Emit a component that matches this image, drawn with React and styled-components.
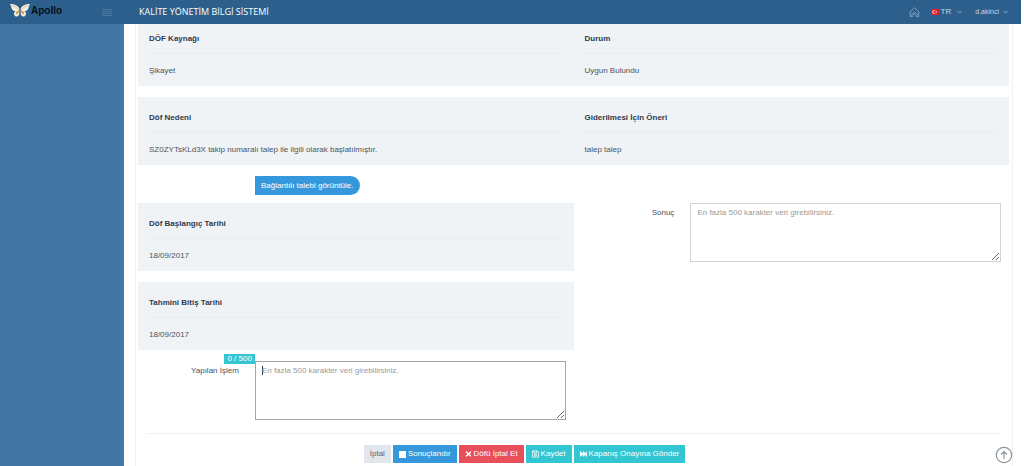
import React from 'react'
import styled, { createGlobalStyle } from 'styled-components';
import { FaTimes, FaRegSave, FaFastForward } from 'react-icons/fa';

const limitText = 'En fazla 500 karakter veri girebilirsiniz.';

function Butterfly() {
  return (
    <svg width='20' height='15' viewBox='0 0 40 30' aria-hidden='true'>
      <path d='M19 11C15 4 7 1 0 2c1 3 3 5 3 8 1 4 4 6 8 7-4 2-4 6-1 9 4 3 9 0 9-7z' fill='#f6f0e4' />
      <path d='M21 11C25 4 33 1 40 2c-1 3-3 5-3 8-1 4-4 6-8 7 4 2 4 6 1 9-4 3-9 0-9-7z' fill='#f6f0e4' />
      <path d='M4 5c6 2 10 4 14 9M12 24c1-4 3-6 6-8M36 5c-6 2-10 4-14 9M28 24c-1-4-3-6-6-8' fill='none' stroke='#b9a27c' strokeWidth='1.2' />
      <path d='M12 18l5-3 1 3-4 5zM28 18l-5-3-1 3 4 5z' fill='#cf9440' />
      <path d='M20 10v11M20 10l-3-5M20 10l3-5' fill='none' stroke='#4a443c' strokeWidth='1.4' />
    </svg>
  )
}

function HomeIcon() {
  return (
    <svg width='11' height='10' viewBox='0 0 22 20' fill='none' stroke='currentColor' strokeWidth='1.5' aria-hidden='true'>
      <path d='M1 11L11 1.500 21 11M2.500 10v9h5c0-3 1-5 3.500-5s3.500 2 3.500 5h5v-9M3 18l5-6 3-2 3 2 5 6' />
    </svg>
  )
}

function Chevron() {
  return (
    <svg className='chevron' width='5' height='4' viewBox='0 0 10 8' fill='none' stroke='currentColor' strokeWidth='2' aria-hidden='true'>
      <path d='M1 2l4 4 4-4' />
    </svg>
  )
}

function Flag() {
  return (
    <svg width='8' height='6' viewBox='0 0 16 12' aria-hidden='true'>
      <rect width='16' height='12' rx='1' fill='#e0202e' />
      <circle cx='6' cy='6' r='3.300' fill='#fff' />
      <circle cx='7' cy='6' r='2.500' fill='#e0202e' />
      <path d='M9 6l3-1.500v3z' fill='#fff' />
    </svg>
  )
}

function StopIcon() {
  return (
    <svg width='7' height='7' viewBox='0 0 7 7' fill='currentColor' aria-hidden='true'>
      <rect width='7' height='7' />
    </svg>
  )
}

function Info({ title, value }) {
  return (
    <InfoBlock>
      <h2>{title}</h2>
      <p>{value}</p>
    </InfoBlock>
  )
}

function App() {
  return (
    <>
      <GlobalStyle />
      <Header>
        <Brand>
          <Logo href='#'><Butterfly />Apollo</Logo>
          <MenuButton type='button' aria-label='Menu'><span /><span /><span /><span /></MenuButton>
        </Brand>
        <h1>KALİTE YÖNETİM BİLGİ SİSTEMİ</h1>
        <TopNav>
          <a href='#' aria-label='Home' className='home'><HomeIcon /></a>
          <a href='#' className='lang'><Flag />TR<Chevron /></a>
          <a href='#' className='user'>d.akinci<Chevron /></a>
        </TopNav>
      </Header>
      <Page>
        <Sidebar />
        <Content>
          <Portlet>
            <Panel>
              <Info title='DÖF Kaynağı' value='Şikayet' />
              <Info title='Durum' value='Uygun Bulundu' />
            </Panel>
            <Panel>
              <Info title='Döf Nedeni' value='SZ0ZYTsKLd3X takip numaralı talep ile ilgili olarak başlatılmıştır.' />
              <Info title='Giderilmesi İçin Öneri' value='talep talep' />
            </Panel>
            <LinkRow>
              <PillButton type='button'>Bağlantılı talebi görüntüle.</PillButton>
            </LinkRow>
            <Columns>
              <Column>
                <Panel><Info title='Döf Başlangıç Tarihi' value='18/09/2017' /></Panel>
                <Panel><Info title='Tahmini Bitiş Tarihi' value='18/09/2017' /></Panel>
                <Field>
                  <label htmlFor='islem'>Yapılan İşlem</label>
                  <div className='control'>
                    <Counter>0 / 500</Counter>
                    <TextArea id='islem' placeholder={limitText} $active />
                  </div>
                </Field>
              </Column>
              <Column>
                <Field>
                  <label htmlFor='sonuc'>Sonuç</label>
                  <div className='control'>
                    <TextArea id='sonuc' placeholder={limitText} />
                  </div>
                </Field>
              </Column>
            </Columns>
            <Actions>
              <Button type='button' $bg='#e1e5ec' $color='#666'>İptal</Button>
              <Button type='button' $bg='#3598dc'><StopIcon />Sonuçlandır</Button>
              <Button type='button' $bg='#e7505a'><FaTimes />Döfü İptal Et</Button>
              <Button type='button' $bg='#32c5d2'><FaRegSave />Kaydet</Button>
              <Button type='button' $bg='#32c5d2'><FaFastForward />Kapanış Onayına Gönder</Button>
            </Actions>
          </Portlet>
        </Content>
      </Page>
      <ToTop href='#' aria-label='Top'>
        <svg width='18' height='18' viewBox='0 0 18 18' fill='none' stroke='currentColor' aria-hidden='true'>
          <circle cx='9' cy='9' r='7.700' strokeWidth='1.200' />
          <path d='M9 13V5.500M6 8.500l3-3 3 3' strokeWidth='1.200' />
        </svg>
      </ToTop>
    </>
  )
}

export default App;

const GlobalStyle = createGlobalStyle`
*{
  box-sizing:border-box;
}
body{
  margin:0;
  background:#fff;
  color:#4a5362;
  font-family:"Liberation Sans", Arial, sans-serif;
  font-size:8px;
  line-height:10px;
}
h1, h2, p{
  margin:0;
}
a{
  color:inherit;
  text-decoration:none;
}
button, textarea{
  font:inherit;
}
`;

const Header = styled.header`
position:fixed;
top:0;
left:0;
right:3px;
z-index:2;
height:24px;
display:flex;
align-items:center;
background:#2c5f8c;
color:#fff;
h1{
  flex:1;
  font-family:"Open Sans", sans-serif;
  font-size:9px;
  line-height:24px;
  font-weight:400;
}
`;

const Brand = styled.div`
width:139px;
height:24px;
display:flex;
justify-content:space-between;
padding:3px 27px 0 10px;
`;

const Logo = styled.a`
height:15px;
display:flex;
align-items:center;
gap:1px;
color:#080d14;
font-size:10px;
font-weight:700;
`;

const MenuButton = styled.button`
width:10px;
height:18px;
display:flex;
flex-direction:column;
justify-content:center;
gap:1px;
padding:0;
border:none;
background:none;
cursor:pointer;
span{
  height:1px;
  background:#4a79a3;
}
`;

const TopNav = styled.nav`
display:flex;
align-items:center;
color:#c6d8ea;
padding-right:13px;
a{
  display:flex;
  align-items:center;
}
.home{
  color:#8fb0cf;
  margin-right:11px;
}
.lang{
  gap:2px;
  margin-right:13px;
}
.user{
  font-size:7px;
}
.chevron{
  color:#8fb0cf;
  margin-left:4px;
}
`;

const Page = styled.div`
display:flex;
min-height:100vh;
`;

const Sidebar = styled.aside`
width:124px;
flex-shrink:0;
background:#4276a5;
`;

const Content = styled.main`
flex:1;
display:flex;
padding:0 11px;
`;

const Portlet = styled.section`
flex:1;
padding:18px 3px 3px 2px;
border:1px solid #eef1f5;
border-width:0 1px;
`;

const Panel = styled.div`
display:flex;
height:68px;
margin-bottom:11px;
background:#eff3f6;
`;

const InfoBlock = styled.div`
flex:1;
padding:16px 11px 0;
h2{
  font-size:8px;
  line-height:10px;
  color:#2f3b4c;
  padding-bottom:9px;
  border-bottom:1px solid #e9edf1;
}
p{
  padding-top:12px;
}
`;

const LinkRow = styled.div`
padding:0 0 8px 117px;
`;

const PillButton = styled.button`
display:block;
height:19px;
padding:0 6px;
border:none;
border-radius:0 10px 10px 0;
background:#3598dc;
color:#fff;
cursor:pointer;
`;

const Columns = styled.div`
display:grid;
grid-template-columns:1fr 1fr;
`;

const Column = styled.div`
min-width:0;
`;

const Field = styled.div`
display:grid;
grid-template-columns:1fr 3fr;
label{
  padding:5px 8px 0 0;
  text-align:right;
}
.control{
  position:relative;
  padding:0 8px;
}
`;

const Counter = styled.span`
position:absolute;
right:calc(100% - 8px);
top:-7px;
padding:0 3px;
background:#36c6d3;
color:#fff;
white-space:nowrap;
`;

const TextArea = styled.textarea`
display:block;
width:100%;
height:59px;
padding:4px 6px;
border:1px solid ${props => props.$active ? '#a5a5a5' : '#d0d3d8'};
background:#fff;
resize:vertical;
outline:none;
${props => props.$active && `
background:linear-gradient(#333, #333) 6px 4px / 1px 9px no-repeat #fff;
`}
&::placeholder{
  color:#999;
}
`;

const Actions = styled.div`
display:flex;
gap:2px;
margin:13px 8px 0;
padding:11px 0 0 25%;
border-top:1px solid #eef0f3;
`;

const Button = styled.button`
height:18px;
display:flex;
align-items:center;
gap:2px;
padding:0 6px;
border:none;
background:${props => props.$bg};
color:${props => props.$color || '#fff'};
cursor:pointer;
svg{
  width:7px;
}
`;

const ToTop = styled.a`
position:fixed;
right:11px;
bottom:2px;
height:18px;
color:#8c949d;
`;
